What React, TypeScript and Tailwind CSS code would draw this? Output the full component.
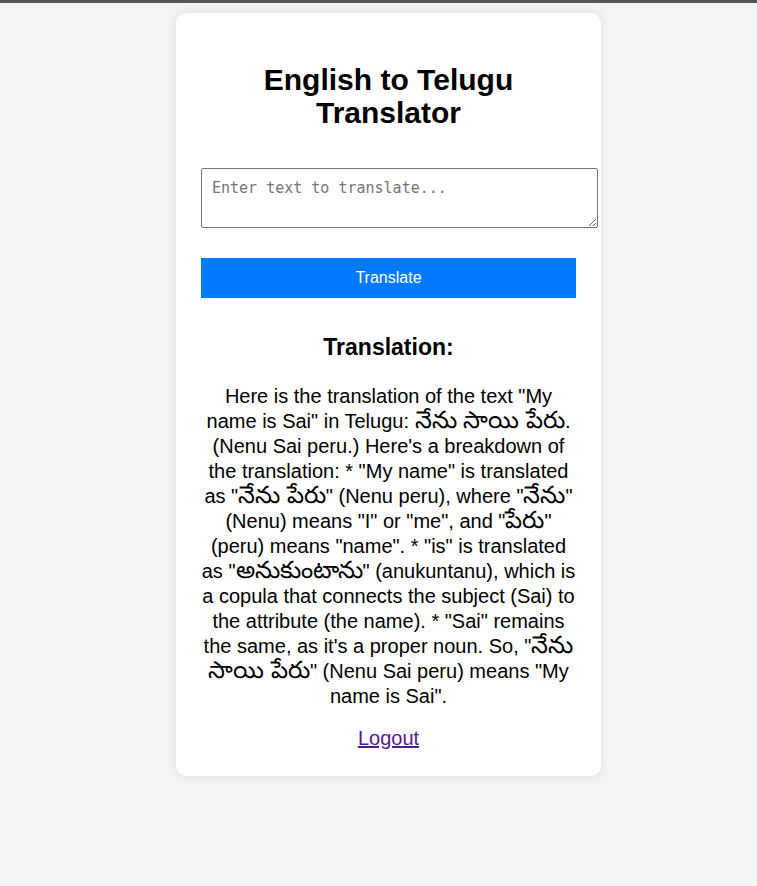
import React, { useState } from 'react';

// Telugu words render narrower here than in the reference, so bump their size a bit
const T = ({ children }: { children: React.ReactNode }) => (
  <span className="text-[24px] leading-[0]">{children}</span>
);

const App = () => {
  const [text, setText] = useState('');

  return (
    <div className="min-h-screen bg-[#f4f4f4] font-['Liberation_Sans',Arial,sans-serif] text-[20px] text-black">
      <div className="h-[3px] bg-[#555555]" />
      <div className="flex justify-center pt-[10px] pl-[20px]">
        <div className="w-[425px] bg-white rounded-[10px] shadow-[0_0_10px_rgba(0,0,0,0.1)] px-[25px] pt-[25px] pb-[26px] text-center">
          <h2 className="mt-[25px] text-[30px] leading-[33px] font-bold">
            English to Telugu Translator
          </h2>

          <textarea
            value={text}
            onChange={(e) => setText(e.target.value)}
            placeholder="Enter text to translate..."
            className="block mt-[39px] w-[397px] h-[60px] p-[10px] border border-[#767676] rounded-[2px] font-['DejaVu_Sans_Mono',monospace] text-[15px] leading-[18px] text-left placeholder:text-[#757575] outline-none"
          />

          <button className="block mt-[30px] w-full h-[40px] bg-[#007bff] text-white text-[16px]">
            Translate
          </button>

          <h3 className="mt-[36px] text-[23px] leading-[26px] font-bold">Translation:</h3>

          <p className="mt-[24px] leading-[25px]">
            Here is the translation of the text "My name is Sai" in Telugu: <T>నేను సాయి పేరు</T>.
            (Nenu Sai peru.) Here's a breakdown of the translation: * "My name" is translated as
            "<T>నేను పేరు</T>" (Nenu peru), where "<T>నేను</T>" (Nenu) means "I" or "me", and
            "<T>పేరు</T>" (peru) means "name". * "is" is translated as "<T>అనుకుంటాను</T>"
            (anukuntanu), which is a copula that connects the subject (Sai) to the attribute (the
            name). * "Sai" remains the same, as it's a proper noun. So, "<T>నేను సాయి పేరు</T>"
            (Nenu Sai peru) means "My name is Sai".
          </p>

          <div className="mt-[18px] leading-[23px]">
            <a href="#" className="text-[#551a8b] underline">
              Logout
            </a>
          </div>
        </div>
      </div>
    </div>
  );
};

export default App;
